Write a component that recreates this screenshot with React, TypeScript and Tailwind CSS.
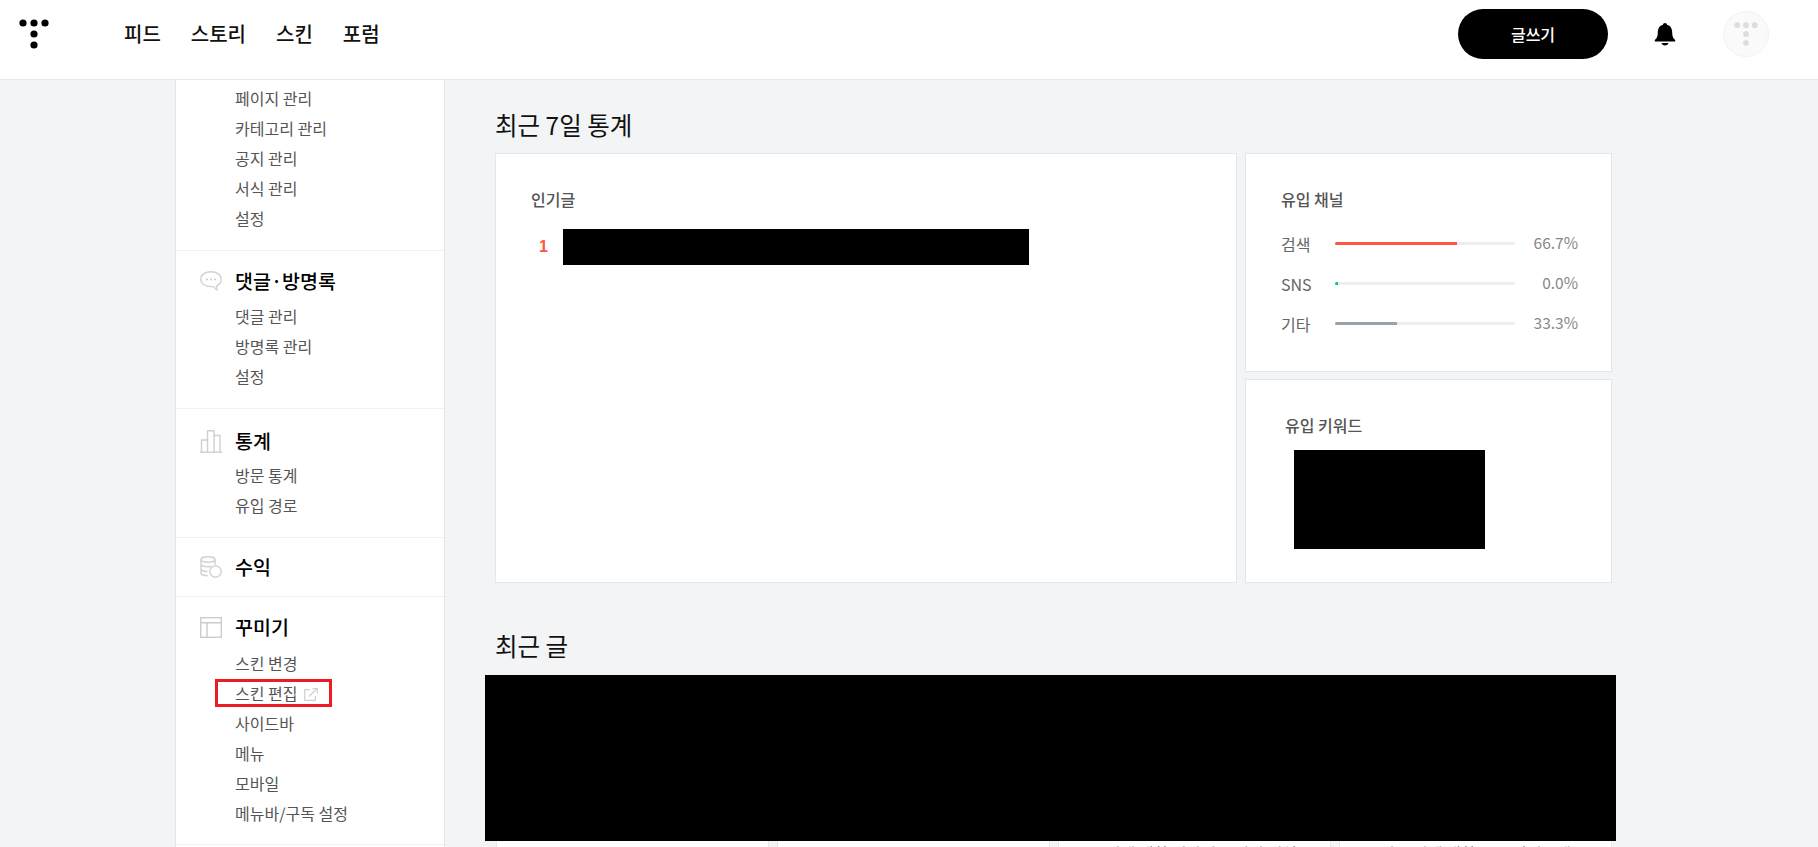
import React from "react";

const FONT = "font-['Noto_Sans_CJK_KR','Noto_Sans',sans-serif]";

function Logo({ className, fill }: { className?: string; fill: string }) {
  return (
    <svg viewBox="0 0 30 30" className={className} fill={fill}>
      <circle cx="4" cy="4" r="3.6" />
      <circle cx="15" cy="4" r="3.6" />
      <circle cx="26" cy="4" r="3.6" />
      <circle cx="15" cy="15" r="3.6" />
      <circle cx="15" cy="26" r="3.6" />
    </svg>
  );
}

function Item({ children }: { children: React.ReactNode }) {
  return <li className="h-[30px] leading-[30px] text-[16px] text-[#555] pl-[59px] whitespace-nowrap">{children}</li>;
}

function CommentIcon() {
  return (
    <svg width="22" height="20" viewBox="0 0 22 20" fill="none" stroke="#d2d2d2" strokeWidth="1.4">
      <path d="M11 .8C5 .8.8 4 .8 8.200S5 15.600 11 15.600h2.500l3.300 3.300v-4.200c2.800-1.200 4.400-3.500 4.400-6.500C21.200 4 17 .8 11 .8z" />
      <g fill="#c8c8c8" stroke="none">
        <circle cx="7" cy="8.400" r="1" />
        <circle cx="11" cy="8.400" r="1" />
        <circle cx="15" cy="8.400" r="1" />
      </g>
    </svg>
  );
}

function ChartIcon() {
  return (
    <svg width="22" height="23" viewBox="0 0 22 23" fill="none" stroke="#d0d0d0" strokeWidth="1.400">
      <path d="M0 22.200h22" />
      <path d="M1.500 22V10h6v12M7.500 22V.8h6.500V22M14 22V5.500h6V22" />
    </svg>
  );
}

function CoinIcon() {
  return (
    <svg width="22" height="22" viewBox="0 0 22 22" fill="none" stroke="#d4d4d4" strokeWidth="1.500">
      <ellipse cx="8" cy="3.500" rx="7" ry="2.800" />
      <path d="M1 3.500v13.500c0 1.500 3 2.800 7 2.800M15 3.500v5M1 8c0 1.500 3 2.800 7 2.800 1.500 0 2.500-.2 3.500-.5M1 12.800c0 1.500 3 2.800 6.500 2.800" />
      <circle cx="15.500" cy="15.500" r="5.700" />
    </svg>
  );
}

function LayoutIcon() {
  return (
    <svg width="22" height="21" viewBox="0 0 22 21" fill="none" stroke="#cccccc" strokeWidth="1.400">
      <rect x=".7" y=".7" width="20.600" height="19.600" />
      <path d="M.7 5.800h20.600M7 5.800v14.500" />
    </svg>
  );
}

function LinkIcon() {
  return (
    <svg width="14" height="13" viewBox="0 0 14 13" fill="none" stroke="#d0d0d0" strokeWidth="1.200" className="inline-block ml-[7px] align-[-1px]">
      <path d="M6 1.600H.7v10.700h10.600V8" />
      <path d="M5 8.500 12.500 1M8.500.7h4.800v4.800" />
    </svg>
  );
}

function Section({ title, icon, children, className }: { title: string; icon: React.ReactNode; children?: React.ReactNode; className?: string }) {
  return (
    <div className={`border-b border-[#f0f1f4] ${className ?? ""}`}>
      <div className="h-[30px] flex items-center">
        <span className="w-[59px] pl-[24px] flex items-center shrink-0">{icon}</span>
        <span className="text-[19.5px] font-medium text-black whitespace-nowrap">{title}</span>
      </div>
      {children && <ul>{children}</ul>}
    </div>
  );
}

function Bar({ label, value, width, color }: { label: string; value: string; width: string; color: string }) {
  return (
    <div className="h-[40px] flex items-center">
      <span className="w-[54px] text-[16px] text-[#666] shrink-0 relative top-[1px]">{label}</span>
      <div className="w-[180px] h-[3px] bg-[#eeeeee] rounded-full shrink-0 overflow-hidden">
        <div className="h-full" style={{ width, backgroundColor: color }} />
      </div>
      <span className="flex-1 text-right text-[15.500px] text-[#888]">{value}</span>
    </div>
  );
}

export default function App() {
  return (
    <div className={`h-[847px] w-[1818px] overflow-hidden bg-[#f3f4f6] ${FONT}`}>
      <header className="h-[80px] bg-white border-b border-[#e6e7eb] flex items-center">
        <Logo className="w-[30px] h-[30px] ml-[19px] mb-[12px]" fill="#000" />
        <nav className="flex ml-[75px] gap-[30px] text-[20px] text-[#111] mb-[12px]">
          <span className="font-medium">피드</span>
          <span className="font-medium">스토리</span>
          <span className="font-medium">스킨</span>
          <span className="font-medium">포럼</span>
        </nav>
        <div className="ml-auto flex items-center mb-[11px]">
          <button className="w-[150px] h-[50px] bg-black text-white rounded-full text-[16px] font-medium">글쓰기</button>
          <svg width="22" height="24" viewBox="0 0 22 24" fill="#000" className="ml-[46px]">
            <path d="M11 1c1.200 0 2 .8 2 1.800 3.600.9 5.200 4 5.200 7.700 0 4 1.200 6 3 7.500v1.500H.8V18c1.800-1.500 3-3.500 3-7.500 0-3.700 1.600-6.800 5.200-7.700C9 1.800 9.800 1 11 1z" />
            <path d="M7.500 21h7c-.3 1.400-1.700 2.400-3.500 2.400S7.800 22.400 7.500 21z" />
          </svg>
          <div className="w-[46px] h-[46px] rounded-full bg-[#fafafa] border border-[#f2f2f2] ml-[47px] mr-[49px] flex items-center justify-center">
            <Logo className="w-[24px] h-[24px]" fill="#dddddd" />
          </div>
        </div>
      </header>
      <div className="flex">
        <aside className="ml-[175px] w-[270px] h-[767px] bg-white border-x border-[#e3e6ee] shrink-0 overflow-hidden">
          <div className="border-b border-[#f0f1f4] pt-[3px] pb-[17px]">
            <ul>
              <Item>페이지 관리</Item>
              <Item>카테고리 관리</Item>
              <Item>공지 관리</Item>
              <Item>서식 관리</Item>
              <Item>설정</Item>
            </ul>
          </div>
          <Section title="댓글·방명록" icon={<CommentIcon />} className="pt-[15px] pb-[17px] [&>ul]:mt-[5px]">
            <Item>댓글 관리</Item>
            <Item>방명록 관리</Item>
            <Item>설정</Item>
          </Section>
          <Section title="통계" icon={<ChartIcon />} className="pt-[17px] pb-[17px] [&>ul]:mt-[4px]">
            <Item>방문 통계</Item>
            <Item>유입 경로</Item>
          </Section>
          <Section title="수익" icon={<CoinIcon />} className="pt-[14px] pb-[14px]" />
          <Section title="꾸미기" icon={<LayoutIcon />} className="pt-[15px] pb-[16px] [&>ul]:mt-[6px]">
            <Item>스킨 변경</Item>
            <li className="h-[30px] pl-[39px] pt-[1px]">
              <div className="w-[117px] h-[28px] leading-[22px] border-[3px] border-[#ed1c24] pl-[17px] text-[16px] text-[#555] whitespace-nowrap">
                스킨 편집<LinkIcon />
              </div>
            </li>
            <Item>사이드바</Item>
            <Item>메뉴</Item>
            <Item>모바일</Item>
            <Item>메뉴바/구독 설정</Item>
          </Section>
        </aside>
        <main className="pl-[50px] flex-1 min-w-0">
          <h2 className="text-[24.5px] text-[#111] h-[73px] pt-[16px] leading-[57px]">최근 7일 통계</h2>
          <div className="flex gap-[8px] w-[1117px]">
            <section className="w-[742px] h-[430px] bg-white border border-[#e3e6ee] pt-[33px] pl-[35px]">
              <h3 className="text-[16px] font-medium text-[#555]">인기글</h3>
              <div className="flex items-center mt-[18px]">
                <span className="w-[32px] pl-[8px] text-[16px] font-bold font-['Liberation_Sans',sans-serif] text-[#ff5544]">1</span>
                <div className="w-[466px] h-[36px] bg-black" />
              </div>
            </section>
            <div className="flex flex-col gap-[7px] w-[367px]">
              <section className="h-[219px] bg-white border border-[#e3e6ee] pt-[33px] pl-[35px] pr-[33px]">
                <h3 className="text-[16px] font-medium text-[#555]">유입 채널</h3>
                <div className="mt-[12px]">
                  <Bar label="검색" value="66.7%" width="68%" color="#ff5544" />
                  <Bar label="SNS" value="0.0%" width="1.500%" color="#00c4a7" />
                  <Bar label="기타" value="33.3%" width="34.500%" color="#9aa1ab" />
                </div>
              </section>
              <section className="h-[204px] bg-white border border-[#e3e6ee] pt-[33px] pl-[39px]">
                <h3 className="text-[16px] font-medium text-[#555]">유입 키워드</h3>
                <div className="w-[191px] h-[99px] bg-black ml-[9px] mt-[13px]" />
              </section>
            </div>
          </div>
          <h2 className="text-[24.5px] text-[#111] h-[47px] leading-[36px] mt-[45px]">최근 글</h2>
          <div className="w-[1131px] h-[166px] bg-black ml-[-10px]" />
          <div className="flex gap-[8px] w-[1117px] ml-[1px]">
            <div className="w-[273px] h-[40px] bg-white border-x border-[#e3e6ee]" />
            <div className="w-[273px] h-[40px] bg-white border-x border-[#e3e6ee]" />
            <div className="w-[273px] h-[40px] bg-white border-x border-[#e3e6ee] pl-[32px] text-[16px] text-[#666] whitespace-nowrap overflow-hidden">무엇에 대한 이야기 글인지 해설</div>
            <div className="w-[273px] h-[40px] bg-white border-x border-[#e3e6ee] pl-[40px] text-[16px] text-[#666] whitespace-nowrap overflow-hidden">이 스킨에 대한 글을 읽어보세요</div>
          </div>
        </main>
      </div>
    </div>
  );
}
